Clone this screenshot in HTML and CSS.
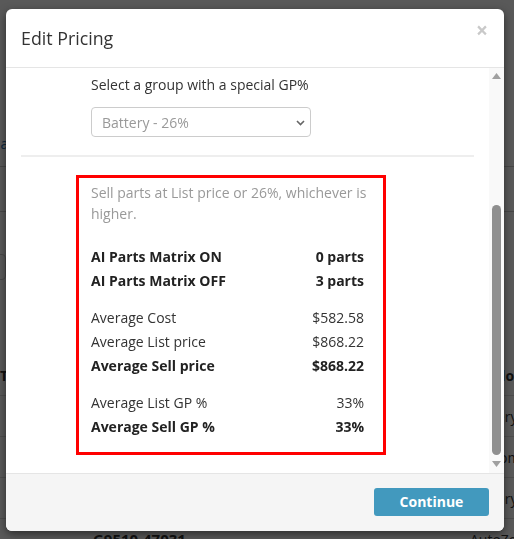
FILE: index.html
```html
<!DOCTYPE html>
<html lang="en">
<head>
<meta charset="utf-8">
<title>Edit Pricing</title>
<link rel="stylesheet" href="styles.css">
</head>
<body>
<div class="bg-page">
  <div class="bg-link-row"><span class="bg-link">la</span></div>
  <div class="bg-rule r1"></div>
  <div class="bg-rule r2"></div>
  <div class="bg-input"></div>
  <div class="bg-table">
    <div class="bg-row head"><span class="bg-left">T</span><span class="bg-right">Vendor</span></div>
    <div class="bg-row"><span class="bg-left"></span><span class="bg-right">Battery</span></div>
    <div class="bg-row"><span class="bg-left"></span><span class="bg-right">Custom</span></div>
    <div class="bg-row"><span class="bg-left"></span><span class="bg-right">Battery</span></div>
    <div class="bg-row"><span class="bg-left part">G9510-47031</span><span class="bg-right">AutoZone</span></div>
  </div>
</div>
<div class="backdrop"></div>

<div class="modal">
  <div class="modal-header">
    <h4 class="modal-title">Edit Pricing</h4>
    <span class="close">&times;</span>
  </div>
  <div class="modal-body">
    <div class="body-content">
      <div class="group">
        <div class="group-label">Select a group with a special GP%</div>
        <div class="select">
          <span>Battery - 26%</span>
          <svg class="chev" width="9" height="6" viewBox="0 0 9 6"><path d="M1 1 L4.5 4.5 L8 1" fill="none" stroke="#666" stroke-width="1.6"/></svg>
        </div>
      </div>
      <div class="divider"></div>
      <div class="summary">
        <p class="note">Sell parts at List price or 26%, whichever is higher.</p>
        <div class="rows">
          <div class="row bold"><span>AI Parts Matrix ON</span><span>0 parts</span></div>
          <div class="row bold"><span>AI Parts Matrix OFF</span><span>3 parts</span></div>
        </div>
        <div class="rows">
          <div class="row"><span>Average Cost</span><span>$582.58</span></div>
          <div class="row"><span>Average List price</span><span>$868.22</span></div>
          <div class="row bold"><span>Average Sell price</span><span>$868.22</span></div>
        </div>
        <div class="rows">
          <div class="row"><span>Average List GP %</span><span>33%</span></div>
          <div class="row bold"><span>Average Sell GP %</span><span>33%</span></div>
        </div>
      </div>
    </div>
    <div class="scrollbar">
      <svg class="arrow" width="9" height="6" viewBox="0 0 9 6"><path d="M0 6 L4.5 0 L9 6 Z" fill="#a0a0a0"/></svg>
      <div class="thumb"></div>
      <svg class="arrow down" width="9" height="6" viewBox="0 0 9 6"><path d="M0 0 L9 0 L4.5 6 Z" fill="#a0a0a0"/></svg>
    </div>
  </div>
  <div class="modal-footer">
    <button class="btn">Continue</button>
  </div>
</div>
</body>
</html>
```

FILE: styles.css
```css
html, body {
  margin: 0;
  padding: 0;
  width: 514px;
  height: 539px;
  overflow: hidden;
  background: #fff;
  font-family: "Open Sans", Lato, "DejaVu Sans", sans-serif;
  color: #333;
}

/* page behind the dialog */
.bg-page {
  display: flex;
  flex-direction: column;
  padding-top: 134px;
  font-size: 14px;
}
.bg-link-row { height: 20px; line-height: 20px; }
.bg-link { color: #2a6fb0; margin-left: -3px; }
.bg-rule { height: 1px; background: #ccc; }
.r1 { margin-top: 12px; }
.r2 { margin-top: 44px; }
.bg-input {
  margin-top: 42px;
  margin-left: -6px;
  width: 10px;
  height: 24px;
  border: 1px solid #ccc;
  border-radius: 4px;
}
.bg-table { margin-top: 75px; }
.bg-row {
  height: 40px;
  border-bottom: 1px solid #ddd;
  display: flex;
  align-items: center;
}
.bg-row.head { font-weight: bold; }
.bg-left { width: 470px; flex: none; }
.bg-left.part { padding-left: 93px; width: 377px; font-weight: bold; font-size: 15px; }
.bg-right { white-space: nowrap; }

.backdrop {
  position: fixed;
  inset: 0;
  background: rgba(0, 0, 0, 0.65);
}

/* dialog */
.modal {
  position: absolute;
  left: 6px;
  top: 9px;
  width: 498px;
  height: 522px;
  background: #fff;
  border-radius: 6px;
  box-shadow: 0 3px 9px rgba(0, 0, 0, 0.5);
  display: flex;
  flex-direction: column;
  overflow: hidden;
}
.modal-header {
  height: 58px;
  flex: none;
  border-bottom: 1px solid #e5e5e5;
  display: flex;
  align-items: center;
  justify-content: space-between;
  padding: 0 15px;
}
.modal-title {
  margin: 0;
  font-size: 17.8px;
  font-weight: normal;
  color: #333;
}
.close {
  font-size: 21px;
  font-weight: bold;
  color: #c9c9c9;
  line-height: 1;
  margin-top: -16px;
  margin-right: 1px;
}

.modal-body {
  height: 405px;
  flex: none;
  display: flex;
}
.body-content {
  flex: 1;
  padding: 7px 15px 0 15px;
}
.group { padding-left: 70px; }
.group-label {
  font-size: 14px;
  line-height: 20px;
  color: #333;
}
.select {
  margin-top: 12px;
  width: 220px;
  height: 30px;
  box-sizing: border-box;
  border: 1px solid #ccc;
  border-radius: 4px;
  display: flex;
  align-items: center;
  justify-content: space-between;
  padding: 0 5px 0 10px;
  font-size: 14px;
  color: #999;
}
.chev { margin-top: 1px; }
.divider {
  margin-top: 18px;
  height: 2px;
  background: #eee;
}
.summary {
  margin-top: 18px;
  margin-left: 55px;
  width: 310px;
  box-sizing: border-box;
  border: 3px solid #f00;
  padding: 4px 19px 13px 12px;
  font-size: 14px;
}
.note {
  margin: 0 -12px 21px 0;
  line-height: 21px;
  color: #999;
}
.rows + .rows { margin-top: 13px; }
.row {
  display: flex;
  justify-content: space-between;
  line-height: 24px;
  color: #333;
}
.row.bold { font-weight: bold; color: #222; }

.scrollbar {
  width: 15px;
  flex: none;
  background: #f9f9f9;
  display: flex;
  flex-direction: column;
  align-items: center;
  padding-top: 5px;
  box-sizing: border-box;
}
.arrow { display: block; }
.thumb {
  margin-top: 126px;
  width: 9px;
  height: 250px;
  border-radius: 5px;
  background: #8f8f8f;
}
.arrow.down { margin-top: 6px; }

.modal-footer {
  flex: 1;
  border-top: 1px solid #e5e5e5;
  background: #f5f5f5;
  display: flex;
  align-items: center;
  justify-content: flex-end;
  padding: 0 15px;
}
.btn {
  width: 115px;
  height: 28px;
  border: none;
  border-radius: 3px;
  background: #4299be;
  color: #fff;
  font-family: inherit;
  font-size: 14px;
  font-weight: bold;
  line-height: 28px;
  padding: 0;
  margin-top: -1px;
}
```
